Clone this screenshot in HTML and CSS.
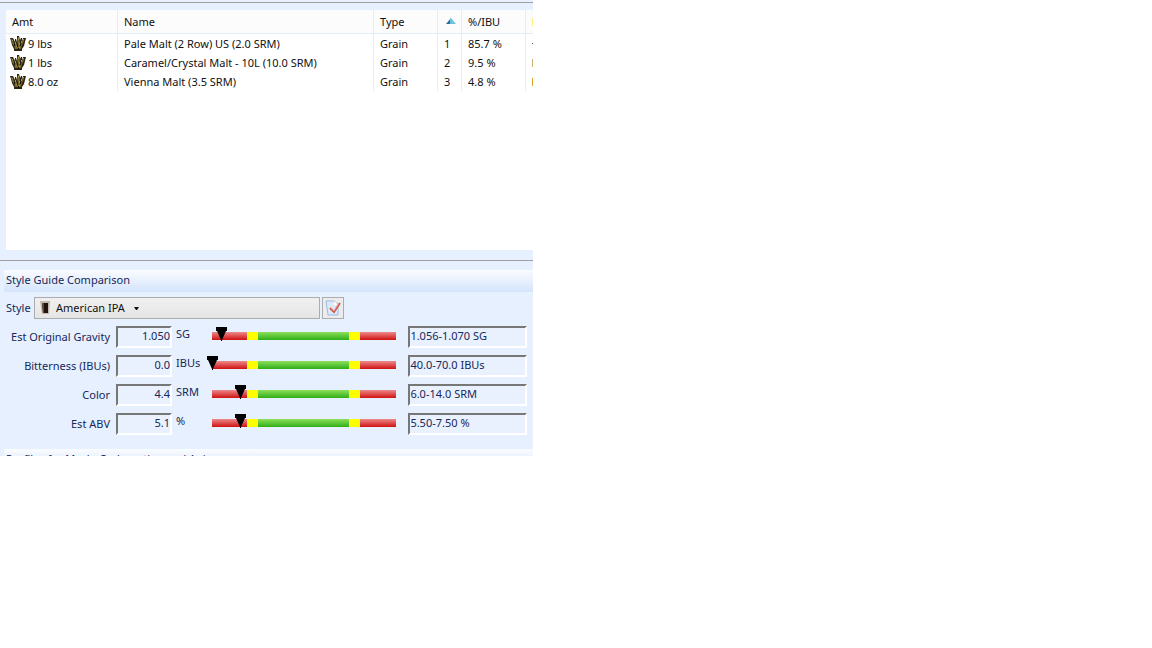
FILE: index.html
```html
<!DOCTYPE html>
<html lang="en">
<head>
  <meta charset="UTF-8">
  <meta name="viewport" content="width=device-width, initial-scale=1.0">
  <title>Style Guide Comparison</title>
  <link rel="stylesheet" href="styles.css">
</head>
<body>
  <svg class="sprite" aria-hidden="true">
    <symbol id="grain" viewBox="0 0 16 15">
      <path fill="#2a2410" d="M0 2h3l2 4V3h1l1 3V0h2l1 4 1-2h1v4l1-4h3l-1 4-1 4-2 3v2H4v-2L2 9 1 5z"/>
      <path fill="#75662a" d="M1 3h1l2 4v3L2 7zM8 1h1l1 5-1 3H8L7 5zM14 3v2l-2 4h-1l1-3zM5 5l2 4H5zM4 9h8l-1 4H5z"/>
      <path fill="#a8964a" d="M8 2h1v2H8zM2 4h1v1H2zM13 3h1v1h-1zM5 6h1v2H5zM9 7h1v2H9zM11 5h1v2h-1zM6 10h1v1H6zM9 11h1v1H9z"/>
      <path fill="#17130a" d="M4 8h1v2H4zM7 8h1v3H7zM10 8h1v2h-1zM8 12h1v2H8z"/>
    </symbol>
  </svg>

  <main class="panel">
    <section class="ingredients">
      <div class="list">
        <table>
          <colgroup>
            <col class="col-amt">
            <col class="col-name">
            <col class="col-type">
            <col class="col-num">
            <col class="col-ibu">
            <col class="col-more">
          </colgroup>
          <thead>
            <tr>
              <th>Amt</th>
              <th>Name</th>
              <th>Type</th>
              <th class="sorted" aria-label="Number">
                <svg width="10" height="7" viewBox="0 0 10 7"><path fill="#2a6f9e" d="M0 6l5-6v6z"/><path fill="#6cc4dc" d="M4 1l1-1 5 6H4z"/></svg>
              </th>
              <th>%/IBU</th>
              <th class="more"><i class="mark yellow"></i></th>
            </tr>
          </thead>
          <tbody>
            <tr>
              <td class="amt"><svg width="16" height="15"><use href="#grain"/></svg>9 lbs</td>
              <td>Pale Malt (2 Row) US (2.0 SRM)</td>
              <td>Grain</td>
              <td>1</td>
              <td>85.7 %</td>
              <td class="more"><i class="mark short"></i></td>
            </tr>
            <tr>
              <td class="amt"><svg width="16" height="15"><use href="#grain"/></svg>1 lbs</td>
              <td>Caramel/Crystal Malt - 10L (10.0 SRM)</td>
              <td>Grain</td>
              <td>2</td>
              <td>9.5 %</td>
              <td class="more"><i class="mark tan"></i></td>
            </tr>
            <tr>
              <td class="amt"><svg width="16" height="15"><use href="#grain"/></svg>8.0 oz</td>
              <td>Vienna Malt (3.5 SRM)</td>
              <td>Grain</td>
              <td>3</td>
              <td>4.8 %</td>
              <td class="more"><i class="mark gold"></i></td>
            </tr>
          </tbody>
        </table>
      </div>
    </section>

    <section class="style-guide">
      <h2>Style Guide Comparison</h2>

      <div class="style-row">
        <label for="style">Style</label>
        <div class="style-select">
          <select id="style">
            <option>American IPA</option>
          </select>
          <svg class="glass" width="10" height="13" viewBox="0 0 10 13"><path fill="#c4b6a8" d="M0 0h10L9 13H2z"/><path fill="#20130d" d="M2 2h6v10H3z"/><path fill="#6b4a35" d="M2 2h2v10H3z"/></svg>
          <svg class="arrow" width="5" height="3" viewBox="0 0 5 3"><path fill="#111" d="M0 0h5L3 3H2z"/></svg>
        </div>
        <button type="button" aria-label="Check style">
          <svg width="16" height="16" viewBox="0 0 16 16"><path fill="#dce9fa" stroke="#9dbbe6" d="M1 1h8l4 3v11H3z"/><path fill="#fff" d="M9 1v4h4"/><path fill="none" stroke="#c9574a" stroke-width="2" d="M5 8l4 4 6-9"/><path fill="none" stroke="#eda093" d="M5 7l4 4 5-8"/></svg>
        </button>
      </div>

      <div class="compare-row">
        <label for="og">Est Original Gravity</label>
        <input id="og" class="value" value="1.050" readonly>
        <span class="unit">SG</span>
        <div class="gauge"><svg class="pointer" style="left: 5%" width="11" height="14" viewBox="0 0 11 14"><path d="M0 0h11v4H10L6 13v1H5v-1L1 4H0z"/></svg></div>
        <input class="range" aria-label="Gravity range" value="1.056-1.070 SG" readonly>
      </div>
      <div class="compare-row">
        <label for="ibu">Bitterness (IBUs)</label>
        <input id="ibu" class="value" value="0.0" readonly>
        <span class="unit">IBUs</span>
        <div class="gauge"><svg class="pointer" style="left: 0%" width="11" height="14" viewBox="0 0 11 14"><path d="M0 0h11v4H10L6 13v1H5v-1L1 4H0z"/></svg></div>
        <input class="range" aria-label="Bitterness range" value="40.0-70.0 IBUs" readonly>
      </div>
      <div class="compare-row">
        <label for="color">Color</label>
        <input id="color" class="value" value="4.4" readonly>
        <span class="unit">SRM</span>
        <div class="gauge"><svg class="pointer" style="left: 15%" width="11" height="14" viewBox="0 0 11 14"><path d="M0 0h11v4H10L6 13v1H5v-1L1 4H0z"/></svg></div>
        <input class="range" aria-label="Color range" value="6.0-14.0 SRM" readonly>
      </div>
      <div class="compare-row">
        <label for="abv">Est ABV</label>
        <input id="abv" class="value" value="5.1" readonly>
        <span class="unit">%</span>
        <div class="gauge"><svg class="pointer" style="left: 15%" width="11" height="14" viewBox="0 0 11 14"><path d="M0 0h11v4H10L6 13v1H5v-1L1 4H0z"/></svg></div>
        <input class="range" aria-label="ABV range" value="5.50-7.50 %" readonly>
      </div>
    </section>

    <section class="profiles">
      <h2>Profiles for Mash, Carbonation and Aging</h2>
    </section>
  </main>
</body>
</html>
```
FILE: styles.css
```css
:root {
  --panel: #e6f0ff;
  --navy: #15285a;
  --line: #a0a0a0;
  --grid: #e4ecf5;
}

* {
  margin: 0;
  padding: 0;
  box-sizing: border-box;
}

body {
  background-color: #fff;
  color: #111;
  font-family: "Noto Sans", "Open Sans", sans-serif;
  font-size: 11px;
  line-height: 16px;
}

input, select, button {
  font: inherit;
  color: inherit;
}

.sprite {
  display: none;
}

.panel {
  width: 46.3%;
  min-width: 533px;
  overflow: hidden;
  background-color: var(--panel);
  padding-top: 2px;
}

/* ingredient list */
.ingredients {
  padding: 7px 0 10px 6px;
  border-top: 1px solid var(--line);
  border-bottom: 1px solid var(--line);
}

.list {
  min-height: 240px;
  overflow: hidden;
  background-color: #fff;
}

table {
  width: 100%;
  table-layout: fixed;
  border-collapse: separate;
  border-spacing: 0;
}

.col-amt { width: 112px; }
.col-name { width: 256px; }
.col-type { width: 64px; }
.col-num { width: 24px; }
.col-ibu { width: 64px; }

th, td {
  padding: 0 6px;
  text-align: left;
  font-weight: normal;
  white-space: nowrap;
  border-right: 1px solid var(--grid);
}

th {
  height: 24px;
  background-color: #fcfcfc;
  border-bottom: 1px solid var(--grid);
}

td {
  height: 19px;
}

td.amt {
  padding-left: 4px;
}

.amt svg {
  margin-right: 2px;
  vertical-align: top;
}

.sorted svg {
  display: block;
  margin-left: 2px;
}

.more {
  padding-right: 0;
  border-right: 0;
}

.mark {
  display: block;
  width: 1px;
  height: 8px;
  background-color: #555;
}

.mark.short { height: 1px; }
.mark.yellow { background-color: #fff27a; }
.mark.tan { background-color: #cdb27a; }
.mark.gold { background-color: #d9a520; }

/* style guide */
.style-guide, .profiles {
  color: var(--navy);
}

h2 {
  margin-left: 4px;
  padding: 2px;
  height: 22px;
  font-size: 11px;
  font-weight: normal;
  background: linear-gradient(#fafcff, #d4e4fb);
}

.style-guide {
  padding: 9px 0 7px;
}

.style-row {
  display: flex;
  align-items: center;
  gap: 2px;
  margin: 5px 0 7px 6px;
}

.style-row label {
  width: 26px;
}

.style-select {
  position: relative;
  width: 286px;
}

.style-select select {
  display: block;
  appearance: none;
  width: 100%;
  height: 22px;
  padding-left: 21px;
  color: #111;
  background: linear-gradient(#f0f0f0, #e5e5e5);
  border: 1px solid #acacac;
  border-radius: 0;
}

.glass, .arrow {
  position: absolute;
  pointer-events: none;
}

.glass {
  left: 6px;
  top: 4px;
}

.arrow {
  left: 100px;
  top: 10px;
}

.style-row button {
  display: grid;
  place-items: center;
  width: 22px;
  height: 22px;
  background-color: #ececec;
  border: 1px solid #acacac;
}

.compare-row {
  display: flex;
  height: 22px;
  margin: 0 6px 7px;
}

.compare-row label {
  width: 104px;
  padding-top: 3px;
  text-align: right;
}

.compare-row input {
  height: 22px;
  padding-bottom: 4px;
  background-color: #e9f1fe;
  border: 2px solid;
  border-color: #777 #fff #fff #777;
  border-radius: 0;
  outline: none;
}

.compare-row .value {
  width: 56px;
  margin-left: 6px;
  text-align: right;
}

.unit {
  width: 40px;
  padding-left: 4px;
}

.gauge {
  position: relative;
  flex: 1;
  height: 8px;
  margin-top: 6px;
  background:
    linear-gradient(90deg, #ff0 11px, transparent 11px calc(100% - 11px), #ff0 0) 49% 0 / 113px 100% no-repeat,
    linear-gradient(#8ee05c, #2fae16) 49% 0 / 113px 100% no-repeat,
    linear-gradient(#ee8a8a, #cf1111);
}

.pointer {
  position: absolute;
  top: -5px;
  margin-left: -5px;
}

.compare-row .range {
  width: 119px;
  margin-left: 12px;
}

.profiles {
  height: 7px;
  overflow: hidden;
}
```
